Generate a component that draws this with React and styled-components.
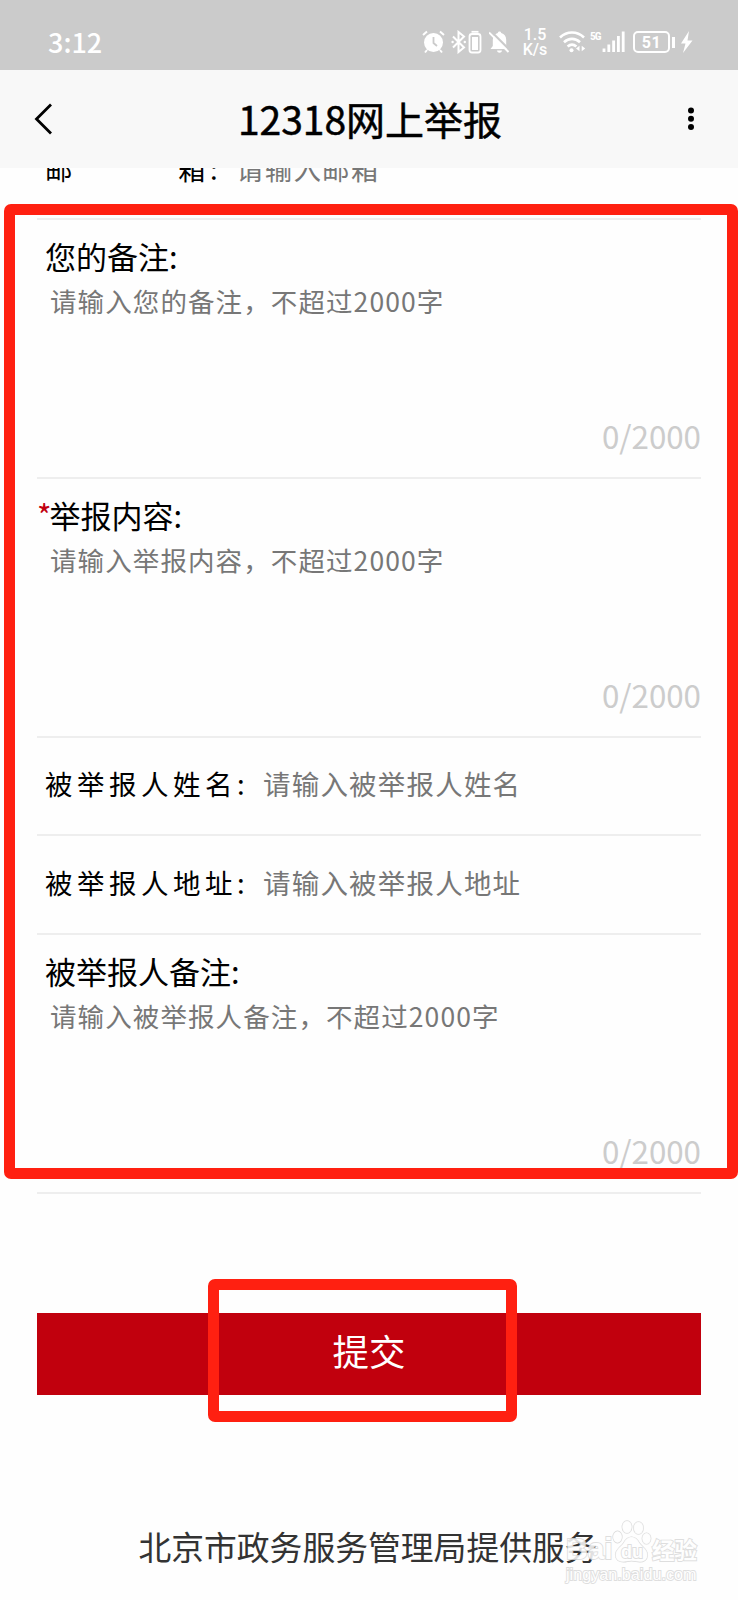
import React from "react";
import styled, { createGlobalStyle } from "styled-components";

const remarkFields = [
  { label: "您的备注:", hint: "请输入您的备注，不超过2000字" },
  { label: "举报内容:", hint: "请输入举报内容，不超过2000字", required: true },
];

const lineFields = [
  { label: "被举报人姓名:", hint: "请输入被举报人姓名" },
  { label: "被举报人地址:", hint: "请输入被举报人地址" },
];

const RemarkField = ({ label, hint, required }) => (
  <Block>
    <BlockLabel $required={required}>
      {required && <Star>*</Star>}
      {label}
    </BlockLabel>
    <BlockHint>{hint}</BlockHint>
    <Counter>0/2000</Counter>
  </Block>
);

const StatusIcons = () => (
  <Icons>
    <svg width="23" height="24" viewBox="0 0 23 24">
      <circle cx="11.5" cy="12.5" r="9.5" fill="#fff" />
      <path
        d="M11.5 7v6l3.5 3"
        fill="none"
        stroke="#cbcbcb"
        strokeWidth="1.8"
      />
      <path
        d="M1 5l4-3.5M22 5l-4-3.5M5 20l-2 2.5M18 20l2 2.5"
        stroke="#fff"
        strokeWidth="2"
      />
    </svg>
    <Bluetooth width="31" height="24" viewBox="0 0 31 24">
      <path
        d="M2 6.5l11 11-5.5 4.5V2L13 6.5l-11 11"
        fill="none"
        stroke="#fff"
        strokeWidth="2"
      />
      <circle cx="1.6" cy="12" r="1.2" fill="#fff" />
      <circle cx="13.8" cy="12" r="1.2" fill="#fff" />
      <rect
        x="18.5"
        y="4"
        width="11"
        height="18.5"
        rx="2.5"
        fill="none"
        stroke="#fff"
        strokeWidth="1.8"
      />
      <path d="M20.5 1.8h7" stroke="#fff" strokeWidth="1.8" />
      <rect x="21" y="7" width="6" height="13" fill="#fff" />
    </Bluetooth>
    <Bell width="21" height="24" viewBox="0 0 21 24">
      <path
        d="M10.5 1.5c1 0 1.6.6 1.7 1.5 3.4.9 5 3.5 5 7v6l2.3 3H1.5l2.3-3v-6c0-3.5 1.7-6.1 5-7 .1-.9.7-1.5 1.7-1.5z"
        fill="#fff"
      />
      <path d="M8 20.5h5c-.3 1.5-1.2 2.2-2.5 2.2S8.300 22 8 20.5z" fill="#fff" />
      <path d="M1.6 1l20 20" stroke="#cbcbcb" strokeWidth="2.4" />
      <path d="M0 2.5l19.5 19.5" stroke="#fff" strokeWidth="1.9" />
    </Bell>
    <Speed>
      <span>1.5</span>
      <span>K/s</span>
    </Speed>
    <Wifi width="27" height="24" viewBox="0 0 27 24">
      <g fill="none" stroke="#fff" strokeWidth="2.6">
        <path d="M1 7.5C8 .8 18 .8 25 7.5" />
        <path d="M5 12.2c4.8-4.4 11.2-4.4 16 0" />
        <path d="M8.6 16.5c2.7-2.3 6.1-2.3 8.8 0" />
      </g>
      <circle cx="12.5" cy="20.3" r="2" fill="#fff" />
      <path d="M20.5 15.8v5.4l-3.5-2.7zM22.7 15.8v5.4l3.5-2.7z" fill="#fff" />
    </Wifi>
    <FiveG>5G</FiveG>
    <svg width="23" height="24" viewBox="0 0 23 24">
      <path
        d="M2 22v-3.5M6.8 22v-7.5M11.6 22V10.5M16.4 22V6M21.2 22V1.5"
        stroke="#fff"
        strokeWidth="2.8"
      />
    </svg>
    <Battery>51</Battery>
    <Nub />
    <svg width="13" height="24" viewBox="0 0 13 24">
      <path d="M9 1L1 13.5h4.5L3 23l9.5-12.5H7.5z" fill="#fff" />
    </svg>
  </Icons>
);

const App = () => {
  return (
    <Page lang="zh-CN">
      <GlobalStyle />
      <StatusBar>
        <Time>3:12</Time>
        <StatusIcons />
      </StatusBar>
      <Header>
        <svg width="20" height="34" viewBox="0 0 20 34">
          <path
            d="M18 2.5L3.5 17l14.5 14.5"
            fill="none"
            stroke="#000"
            strokeWidth="2.8"
          />
        </svg>
        <Title>12318网上举报</Title>
        <svg width="8" height="24" viewBox="0 0 8 24">
          <circle cx="4" cy="3.5" r="3" />
          <circle cx="4" cy="11.8" r="3" />
          <circle cx="4" cy="20" r="3" />
        </svg>
      </Header>
      <Form>
        <MailRow>
          <RowLabel $width={191}>
            <MailName>
              <span>邮</span>
              <span>箱</span>
            </MailName>
            :
          </RowLabel>
          <RowHint>请输入邮箱</RowHint>
        </MailRow>
        {remarkFields.map((field) => (
          <RemarkField key={field.label} {...field} />
        ))}
        {lineFields.map((field) => (
          <Row key={field.label}>
            <RowLabel $width={218}>{field.label}</RowLabel>
            <RowHint>{field.hint}</RowHint>
          </Row>
        ))}
        <RemarkField label="被举报人备注:" hint="请输入被举报人备注，不超过2000字" />
      </Form>
      <Submit>提交</Submit>
      <Footer>北京市政务服务管理局提供服务</Footer>
      <FormFrame />
      <SubmitFrame />
      <Watermark>
        <Brand>
          <Bai>Bai</Bai>
          <Paw>
            <svg width="40" height="44" viewBox="0 0 40 44">
              <g fill="#fff" fillOpacity="0.8" stroke="#d4d4d4" strokeWidth="1.2">
                <ellipse cx="5.5" cy="18" rx="4.5" ry="5.8" />
                <ellipse cx="15" cy="8" rx="4.8" ry="6.2" />
                <ellipse cx="26.5" cy="9" rx="4.8" ry="6.2" />
                <ellipse cx="34.5" cy="19.5" rx="4.3" ry="5.5" />
                <path d="M19.5 18c4 0 6 2.5 8 6s8.5 6.5 8 12.5c-.4 4.5-4 6.5-8 6.3-3-.2-5-1-8-1s-5 1-8 1c-4.5 0-8-2-8-6.8 0-6 6-8.5 8-12s4-6 8-6z" />
              </g>
            </svg>
            <Du>du</Du>
          </Paw>
          <Jingyan>经验</Jingyan>
        </Brand>
        <Domain>jingyan.baidu.com</Domain>
      </Watermark>
    </Page>
  );
};

export default App;

/* Styled Components */
const GlobalStyle = createGlobalStyle`
  body {
    margin: 0;
    background: #fefefe;
  }
  * {
    box-sizing: border-box;
  }
`;

const Page = styled.div`
  position: relative;
  display: flex;
  flex-direction: column;
  width: 738px;
  height: 1600px;
  overflow: hidden;
  background: #fefefe;
  color: #000;
  font-family: "Noto Sans CJK SC", sans-serif;
`;

const StatusBar = styled.div`
  display: flex;
  align-items: center;
  justify-content: space-between;
  height: 70px;
  padding: 14px 45px 0 48px;
  background: #cbcbcb;
  color: #fff;
`;

const Time = styled.span`
  font-size: 27px;
  font-weight: 500;
  line-height: 30px;
`;

const Icons = styled.div`
  display: flex;
  align-items: center;
`;

const Bluetooth = styled.svg`
  margin-left: 6px;
`;

const Bell = styled.svg`
  margin-left: 7px;
`;

const Speed = styled.div`
  display: flex;
  flex-direction: column;
  align-items: center;
  width: 24px;
  margin-left: 13px;
  padding-top: 1px;
  font-family: Roboto, sans-serif;
  font-size: 16px;
  font-weight: 500;
  line-height: 14.5px;
`;

const Wifi = styled.svg`
  margin-left: 12px;
`;

const FiveG = styled.span`
  align-self: flex-start;
  width: 12px;
  margin-left: 4px;
  font-family: "Roboto Condensed", Roboto, sans-serif;
  font-size: 11.5px;
  font-weight: 700;
  line-height: 18px;
  letter-spacing: -1px;
`;

const Battery = styled.div`
  width: 37px;
  height: 22px;
  margin-left: 8px;
  border: 2px solid #fff;
  border-radius: 5px;
  font-family: Roboto, sans-serif;
  font-size: 16px;
  font-weight: 700;
  line-height: 19px;
  letter-spacing: 0.5px;
  text-align: center;
`;

const Nub = styled.div`
  width: 3px;
  height: 11px;
  margin: 0 5px 0 2px;
  background: #fff;
`;

const Header = styled.header`
  display: flex;
  align-items: center;
  justify-content: space-between;
  height: 98px;
  padding: 0 43px 0 33px;
  background: #f8f8f8;
`;

const Title = styled.h1`
  margin: 0;
  padding-bottom: 3px;
  font-size: 39px;
  font-weight: 400;
  line-height: 50px;
  -webkit-text-stroke: 0.5px #000;
`;

const Form = styled.div`
  height: 1026px;
  padding: 0 37px;
  overflow: hidden;
`;

const Row = styled.div`
  display: flex;
  align-items: center;
  height: 98.5px;
  padding: 0 8px 5px;
  border-bottom: 2px solid #eee;
`;

/* scrolled halfway under the header */
const MailRow = styled(Row)`
  margin-top: -47px;
  padding-bottom: 2px;
`;

const RowLabel = styled.div`
  display: flex;
  width: ${({ $width }) => $width}px;
  font-size: 27.5px;
  line-height: 40px;
  letter-spacing: 4.5px;
`;

const MailName = styled.span`
  display: flex;
  justify-content: space-between;
  width: 165px;
`;

const RowHint = styled.div`
  color: #777;
  font-size: 27.5px;
  line-height: 40px;
  letter-spacing: 1.2px;
`;

const Block = styled.div`
  display: flex;
  flex-direction: column;
  height: 259px;
  padding: 14px 0 11px;
  border-bottom: 2px solid #eee;
`;

const BlockLabel = styled.div`
  padding-left: ${({ $required }) => ($required ? "0" : "8px")};
  font-size: 31px;
  line-height: 44px;
`;

const Star = styled.span`
  margin-right: -2px;
  color: #c1000f;
`;

const BlockHint = styled.div`
  margin-top: 1px;
  padding-left: 13px;
  color: #777;
  font-size: 26.5px;
  line-height: 44px;
  letter-spacing: 1.1px;
`;

const Counter = styled.div`
  margin-top: auto;
  color: #ccc;
  font-size: 31.3px;
  line-height: 60px;
  text-align: right;
`;

const Submit = styled.button`
  width: 664px;
  height: 82px;
  margin: 119px 37px 0;
  padding: 0 0 8px;
  border: none;
  background: #c1000d;
  color: #fff;
  font-family: inherit;
  font-size: 36.5px;
`;

const Footer = styled.footer`
  margin-top: 127px;
  padding-right: 2px;
  color: #333;
  font-size: 32.8px;
  line-height: 48px;
  text-align: center;
`;

const Frame = styled.div`
  position: absolute;
  border: 11px solid #ff2011;
  border-radius: 7px;
  pointer-events: none;
`;

const FormFrame = styled(Frame)`
  top: 204px;
  left: 4px;
  width: 734px;
  height: 975px;
`;

const SubmitFrame = styled(Frame)`
  top: 1279px;
  left: 208px;
  width: 309px;
  height: 143px;
`;

const Watermark = styled.div`
  position: absolute;
  top: 1519px;
  left: 566px;
  color: #fff;
  opacity: 0.85;
  paint-order: stroke fill;
  -webkit-text-stroke: 1.8px #d9d9d9;
`;

const Brand = styled.div`
  display: flex;
  align-items: flex-end;
  height: 44px;
`;

const Bai = styled.span`
  width: 46px;
  font-family: "Liberation Sans", sans-serif;
  font-size: 30px;
  font-weight: 700;
  line-height: 28px;
`;

const Paw = styled.div`
  position: relative;
  width: 40px;
  height: 44px;
`;

const Du = styled.span`
  position: absolute;
  top: 24px;
  left: 9px;
  font-family: "Liberation Sans", sans-serif;
  font-size: 18px;
  font-weight: 700;
  line-height: 18px;
`;

const Jingyan = styled.span`
  font-size: 22.5px;
  font-weight: 700;
  line-height: 27px;
`;

const Domain = styled.div`
  font-family: "Liberation Sans", sans-serif;
  font-size: 16.2px;
  line-height: 22px;
`;
